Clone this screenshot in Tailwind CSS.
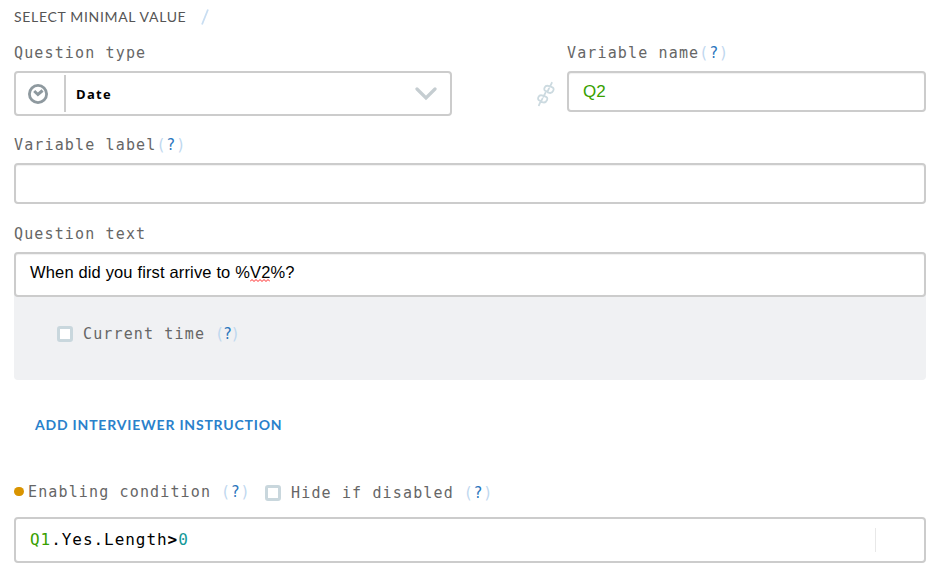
<!DOCTYPE html>
<html lang="en">
<head>
<meta charset="utf-8">
<title>Question editor</title>
<script src="https://cdn.jsdelivr.net/npm/@tailwindcss/browser@4"></script>
</head>
<body class="bg-white">
<main class="flex h-[577px] w-[938px] flex-col overflow-hidden pl-[14px] pr-3 font-['DejaVu_Sans_Mono',monospace] text-[15px] leading-5 tracking-[1.14px] text-[#666]">
  <div class="flex h-[34px] shrink-0 items-center font-['Lato',sans-serif] text-[14px] text-[#555]">
    <span class="w-[187px] whitespace-nowrap tracking-[0.68px]">SELECT MINIMAL VALUE</span>
    <svg class="h-4 w-2" viewBox="0 0 8 16" fill="none" stroke="#c9def2" stroke-width="1.8"><path d="M7 .5 1 15.5"/></svg>
  </div>

  <div class="flex h-[92px] shrink-0">
    <section class="w-[438px]">
      <div class="h-[37px] pt-[9px]">Question type</div>
      <div class="flex h-[45px] items-center rounded-[4px] border-2 border-[#ccc]">
        <svg class="ml-3 size-5" viewBox="0 0 20 20" fill="none" stroke="#8e999f"><circle cx="10" cy="10" r="8.6" stroke-width="2.8"/><path d="m6.2 7 3.7 3.5 4.7-4" stroke-width="3"/></svg>
        <div class="ml-4 h-[37px] w-[2px] bg-[#ccc]"></div>
        <span class="ml-[10px] font-['Open_Sans',sans-serif] text-[13px] font-bold tracking-[1.3px] text-black">Date</span>
        <svg class="ml-auto mr-[12px] h-[14px] w-[24px]" viewBox="0 0 24 14" fill="none" stroke="#c5cdd1" stroke-width="3.2" stroke-linecap="round"><path d="m3 2 9 9 9-9"/></svg>
      </div>
    </section>
    <div class="flex w-[115px] justify-end pt-[47px]">
      <svg class="mr-[11px] h-[26px] w-[20px]" viewBox="0 0 20 26" fill="none" stroke="#ccdae0" stroke-width="1.8" stroke-linecap="round" stroke-linejoin="round"><path d="M15.8 1.8 14 5.6M13 7.4l-1.6 3.4M9.4 11.8l-2 4M6.4 17.6l-1.6 3.2M4.2 21.4l-1.3 2.9M14 5.4l-2-.6c-1.7-.3-2.7.3-3.4 1.8-.8 1.9-.2 3 1.3 3.5l1.8.6M15.3 5.8c2.1.6 2.9 1.9 2 3.9-.8 1.9-2 2.6-3.9 2.2l-1.7-.5M7.8 14.9l-2-.6c-1.7-.3-2.7.3-3.4 1.8-.8 1.9-.2 3 1.3 3.5l1.4.5M9 15.3c2.1.6 2.9 1.9 2 3.9-.8 1.9-2 2.6-3.9 2.2l-1.9-.6"/></svg>
    </div>
    <section class="min-w-0 flex-1">
      <div class="h-[37px] pt-[9px]">Variable name<span class="text-[#bfd8ef] tracking-[0.9px]">(<span class="text-[#2a76bd]">?</span>)</span></div>
      <div class="flex h-[41px] items-center rounded-[4px] border-2 border-[#ccc] pl-[14px] font-['Liberation_Sans',sans-serif] text-[17px] tracking-normal text-[#38a000] shadow-[inset_0_1px_1px_#0000000f]">Q2</div>
    </section>
  </div>

  <div class="h-[37px] shrink-0 pt-[9px]">Variable label<span class="text-[#bfd8ef] tracking-[0.9px]">(<span class="text-[#2a76bd]">?</span>)</span></div>
  <div class="h-[41px] shrink-0 rounded-[4px] border-2 border-[#ccc] shadow-[inset_0_1px_1px_#0000000f]"></div>

  <div class="h-[48px] shrink-0 pt-5">Question text</div>
  <div class="h-[128px] shrink-0 rounded-[4px] bg-[#f0f1f3]">
    <div class="h-[45px] rounded-[4px] border-2 border-[#ccc] bg-white pl-[14px] pt-2 font-['Liberation_Sans',sans-serif] text-[16.5px] tracking-[0.15px] text-black shadow-[inset_0_1px_1px_#0000000f]">When did you first arrive to %<span class="relative">V2<svg class="absolute -bottom-[1px] left-0 h-[3px] w-5" viewBox="0 0 20 3" fill="none" stroke="#f22" stroke-width="1"><path d="m0 2.5 2-2 2 2 2-2 2 2 2-2 2 2 2-2 2 2 2-2 2 2"/></svg></span>%?</div>
    <div class="flex items-center pl-[43px] pt-[27px]">
      <span class="size-4 rounded-[3px] border-[3px] border-[#c9d7dd] bg-white"></span>
      <span class="ml-[10px]">Current time</span>
      <span class="-mt-px ml-[10px] text-[#bfd8ef] tracking-[-1.2px]">(<span class="text-[#2a76bd]">?</span>)</span>
    </div>
  </div>

  <div class="mt-[35px] h-[67px] shrink-0 pl-[21px] font-['Lato',sans-serif] text-[14px] font-bold text-[#2a81cb]"><span class="tracking-[0.8px]">ADD INTERVIEWER INSTRUCTION</span></div>

  <div class="flex h-[35px] shrink-0 items-start">
    <span class="mt-[5px] h-[9px] w-[10px] rounded-full bg-[#d99400]"></span>
    <span class="ml-[4px]">Enabling condition</span>
    <span class="ml-[10px] w-[28px] text-[#bfd8ef] tracking-[0.7px]">(<span class="text-[#2a76bd]">?</span>)</span>
    <span class="ml-[16px] mt-[3px] size-4 rounded-[3px] border-[3px] border-[#c9d7dd] bg-white"></span>
    <span class="ml-[10px] mt-px">Hide if disabled</span>
    <span class="ml-[10px] mt-px text-[#bfd8ef] tracking-[0.7px]">(<span class="text-[#2a76bd]">?</span>)</span>
  </div>
  <div class="flex h-[46px] shrink-0 items-center rounded-[4px] border-2 border-[#ccc] pl-[14px] text-[16px] tracking-[0.95px] text-black"><span class="text-[#38a000]">Q1</span>.Yes.Length<span class="font-bold">&gt;</span><span class="text-[#129999]">0</span><span class="ml-auto mr-[48px] h-6 w-px bg-[#e8e8e8]"></span></div>
</main>
</body>
</html>
